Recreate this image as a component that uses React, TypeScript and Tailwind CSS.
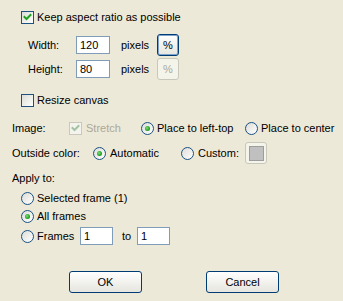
import React from 'react';

function CheckBox({ checked = false, disabled = false }: { checked?: boolean; disabled?: boolean }) {
  return (
    <span
      className={
        'relative flex h-[13px] w-[13px] shrink-0 items-center justify-center border ' +
        (disabled
          ? 'border-[#cac8bb] bg-[#f4f3ee]'
          : 'border-[#1c5180] bg-gradient-to-br from-[#dcdcd7] to-white')
      }
    >
      {checked && (
        <svg width="11" height="11" viewBox="0 0 11 11">
          <path
            d="M2.5 5 L4.5 7 L8.5 3"
            fill="none"
            stroke={disabled ? '#a3c4a3' : '#21a121'}
            strokeWidth="2"
            strokeLinecap="square"
          />
        </svg>
      )}
    </span>
  );
}

function Radio({ checked = false }: { checked?: boolean }) {
  return (
    <span className="flex h-[13px] w-[13px] shrink-0 items-center justify-center rounded-full border border-[#1c5180] bg-gradient-to-br from-[#dcdcd7] to-white">
      {checked && (
        <span className="h-[5px] w-[5px] rounded-full bg-[radial-gradient(circle_at_40%_40%,#7ee07e,#21a121_60%,#1a8a1a)]" />
      )}
    </span>
  );
}

function TextBox({ value, w }: { value: string; w: string }) {
  return (
    <span className={'flex h-[18px] items-center border border-[#7f9db9] bg-white pl-[3px] ' + w}>
      {value}
    </span>
  );
}

function XpButton({
  children,
  w,
  focused = false,
  disabled = false,
}: {
  children: React.ReactNode;
  w: string;
  focused?: boolean;
  disabled?: boolean;
}) {
  return (
    <span
      className={
        'flex h-[22px] items-center justify-center rounded-[3px] border ' +
        w +
        (disabled
          ? ' border-[#c9c7ba] bg-[#f5f4ea] text-[#aca899]'
          : ' border-[#003c74] bg-gradient-to-b from-white to-[#e6e5de]') +
        (focused ? ' shadow-[inset_0_0_0_1px_#7da2ce]' : '')
      }
    >
      {children}
    </span>
  );
}

export default function App() {
  return (
    <div
      className="flex h-[301px] w-[343px] flex-col bg-[#ece9d8] text-[11px] leading-none text-black"
      style={{ fontFamily: '"Liberation Sans", Arial, sans-serif' }}
    >
      {/* keep aspect */}
      <div className="mt-[11px] flex h-[13px] items-center gap-[3px] pl-[21px]">
        <CheckBox checked />
        <span>Keep aspect ratio as possible</span>
      </div>

      {/* width / height */}
      <div className="mt-[10px] flex h-[22px] items-center pl-[28px]">
        <span className="w-[48px]">Width:</span>
        <TextBox value="120" w="w-[34px]" />
        <span className="ml-[11px] w-[36px]">pixels</span>
        <XpButton w="w-[22px]" focused>%</XpButton>
      </div>
      <div className="mt-[2px] flex h-[22px] items-center pl-[28px]">
        <span className="w-[48px]">Height:</span>
        <TextBox value="80" w="w-[34px]" />
        <span className="ml-[11px] w-[36px]">pixels</span>
        <XpButton w="w-[22px]" disabled>%</XpButton>
      </div>

      {/* resize canvas */}
      <div className="mt-[14px] flex h-[13px] items-center gap-[3px] pl-[21px]">
        <CheckBox />
        <span>Resize canvas</span>
      </div>

      {/* image */}
      <div className="mt-[15px] flex h-[13px] items-center pl-[12px]">
        <span className="w-[57px]">Image:</span>
        <span className="flex w-[72px] items-center gap-[4px]">
          <CheckBox checked disabled />
          <span className="text-[#aca899]">Stretch</span>
        </span>
        <span className="flex w-[104px] items-center gap-[3px]">
          <Radio checked />
          <span>Place to left-top</span>
        </span>
        <span className="flex items-center gap-[3px]">
          <Radio />
          <span>Place to center</span>
        </span>
      </div>

      {/* outside color */}
      <div className="mt-[7px] flex h-[22px] items-center pl-[12px]">
        <span className="w-[81px]">Outside color:</span>
        <span className="flex w-[88px] items-center gap-[4px]">
          <Radio checked />
          <span>Automatic</span>
        </span>
        <span className="flex w-[64px] items-center gap-[4px]">
          <Radio />
          <span>Custom:</span>
        </span>
        <span className="flex h-[22px] w-[22px] items-center justify-center rounded-[3px] border border-[#c9c7ba] bg-[#f5f4ea]">
          <span className="h-[15px] w-[15px] border border-[#9d9d9d] bg-[#c0c0c0]" />
        </span>
      </div>

      {/* apply to */}
      <div className="mt-[8px] flex h-[13px] items-center pl-[12px]">Apply to:</div>
      <div className="mt-[7px] flex h-[13px] items-center gap-[3px] pl-[21px]">
        <Radio />
        <span>Selected frame (1)</span>
      </div>
      <div className="mt-[5px] flex h-[13px] items-center gap-[3px] pl-[21px]">
        <Radio checked />
        <span>All frames</span>
      </div>
      <div className="mt-[4px] flex h-[18px] items-center pl-[21px]">
        <span className="flex w-[59px] items-center gap-[3px]">
          <Radio />
          <span>Frames</span>
        </span>
        <TextBox value="1" w="w-[33px]" />
        <span className="ml-[9px] w-[15px]">to</span>
        <TextBox value="1" w="w-[33px]" />
      </div>

      {/* buttons */}
      <div className="mt-[26px] flex items-center gap-[64px] pl-[69px]">
        <XpButton w="w-[73px]">OK</XpButton>
        <XpButton w="w-[73px]">Cancel</XpButton>
      </div>
    </div>
  );
}
